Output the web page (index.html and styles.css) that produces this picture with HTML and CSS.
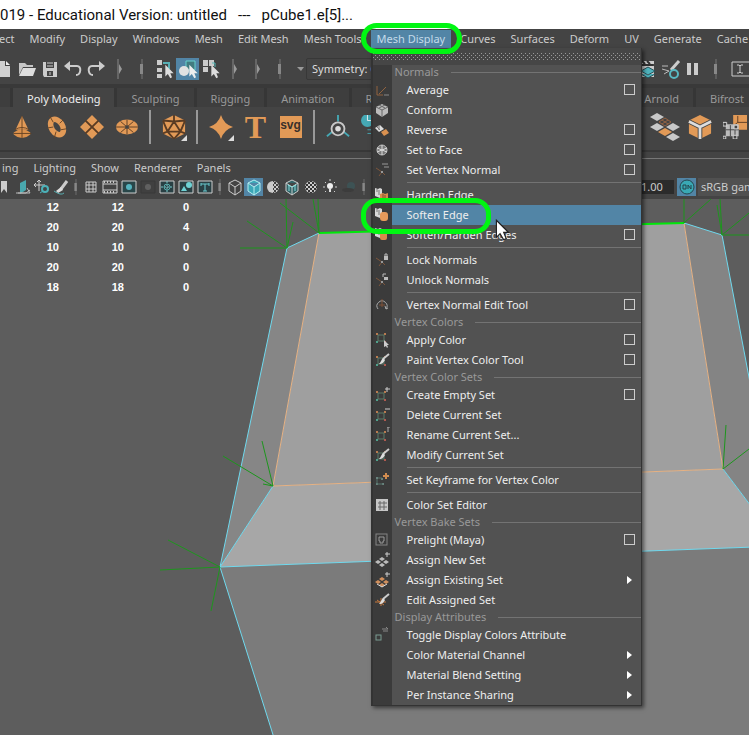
FILE: index.html
```html
<!DOCTYPE html>
<html lang="en">
<head>
<meta charset="utf-8">
<title>Educational Version: untitled</title>
<link rel="stylesheet" href="styles.css">
</head>
<body>
<svg class="defs" aria-hidden="true">
  <defs>
    <symbol id="grip" viewBox="0 0 12 20"><path d="M6 0v20" stroke="#777"/><rect x="4" y="5" width="3" height="10" fill="#888"/></symbol>
    <symbol id="grip-arrow" viewBox="0 0 12 20"><path d="M5 0v20" stroke="#888"/><path d="M6 5l3 5-3 5z" fill="#999"/></symbol>
    <symbol id="cursor" viewBox="0 0 12 18"><path d="M1 1v14l3-3 3 5 2-1-2-5h4z"/></symbol>
    <symbol id="vtx" viewBox="0 0 16 16"><path d="M4 6h6v6H4z" fill="none" stroke="#5d7a68"/><path d="M2 4h2v2H2zM10 4h2v2h-2z" fill="#b87b50"/><path d="M2 12h2v2H2z" fill="#4fa08b"/><path d="M10 12h2v2h-2z" fill="#b05a50"/></symbol>
    <symbol id="normal" viewBox="0 0 16 16"><path d="M2 6l6 4 3 3M8 10l-3 4" fill="none" stroke="#7d563b"/><path d="M7 9h2v2H7z" fill="#999"/></symbol>
    <symbol id="brush" viewBox="0 0 16 16"><path d="M15 2l-6 5" stroke="#ccc" stroke-width="2"/><path d="M9 6l2 2c-2 4-4 4-6 4 2-2 2-4 4-6z" fill="#ddd"/></symbol>
    <symbol id="edge" viewBox="0 0 16 16"><path d="M1 1l3 1 2-1 2 1v8l-2 1-5-2z" fill="#d8d8d8"/><path d="M3 2v3M5 3v5" stroke="#777"/></symbol>
    <symbol id="tiles" viewBox="0 0 16 16"><path d="M8 5l3 2-3 2-3-2zM4 8l3 2-3 2-3-2zM12 8l3 2-3 2-3-2zM8 11l3 2-3 2-3-2z"/></symbol>
    <symbol id="cube" viewBox="0 0 18 18"><path d="M9 2l6 3v8l-6 4-6-4V5zM3 5l6 4 6-4M9 9v8"/></symbol>
    <pattern id="check" width="4" height="4" patternUnits="userSpaceOnUse"><path d="M0 0h2v2H0zM2 2h2v2H2z" fill="#ccc"/></pattern>
  </defs>
</svg>

<div class="app">
<header class="title">019 - Educational Version: untitled &nbsp; --- &nbsp; pCube1.e[5]...</header>

<nav class="menubar" aria-label="Main">
  <button>ect</button><button>Modify</button><button>Display</button><button>Windows</button><button>Mesh</button><button>Edit Mesh</button><button>Mesh Tools</button>
  <div class="open-menu">
    <button class="active" aria-expanded="true">Mesh Display</button>
    <div class="dropdown">
      <div class="tear"></div>
      <h2>Normals</h2>
      <ul>
        <li><svg viewBox="0 0 16 16"><path d="M3 4v9h6M5 12l7-7" fill="none" stroke="#92633f"/><path d="M10 13h5" stroke="#888"/></svg><button>Average</button><input type="checkbox" aria-label="Average options"></li>
        <li><svg viewBox="0 0 16 16"><path d="M8 2l6 3v6l-6 4-6-4V5z" fill="#bbb"/><path d="M2 5l6 3 6-3M8 8v7M5 3l6 3M11 3L5 6" fill="none" stroke="#666"/></svg><button>Conform</button></li>
        <li><svg viewBox="0 0 16 16"><path d="M1 6l5-3 4 4-5 3z" fill="#ddd"/><path d="M7 10l5-3 3 4-5 3z" fill="#d99150"/><path d="M3 5l3 3M5 3v5" stroke="#777"/></svg><button>Reverse</button><input type="checkbox" aria-label="Reverse options"></li>
        <li><svg viewBox="0 0 16 16"><circle cx="8" cy="8" r="5" fill="#777" stroke="#bbb"/><path d="M8 3v10M3 6l10 4M3 10l10-4" stroke="#ddd"/></svg><button>Set to Face</button><input type="checkbox" aria-label="Set to Face options"></li>
        <li><svg viewBox="0 0 16 16"><use href="#normal"/><path d="M8 2h6M10 5h5" stroke="#999"/></svg><button>Set Vertex Normal</button><input type="checkbox" aria-label="Set Vertex Normal options"></li>
        <li class="sep" role="separator"></li>
        <li><svg viewBox="0 0 16 16"><use href="#edge"/><path d="M6 7l3-1 2 1 3-1v7l-3 1-5-1z" fill="#d98a4b"/><path d="M9 7v6M11 8v5" stroke="#81512e"/></svg><button>Harden Edge</button></li>
        <li class="selected"><svg viewBox="0 0 16 16"><use href="#edge"/><rect x="6" y="5" width="8" height="9" rx="3" fill="#e79a5b"/></svg><button>Soften Edge</button>
          <svg class="pointer" viewBox="0 0 12 18"><use href="#cursor" fill="#fff" stroke="#222"/></svg><span class="ring"></span></li>
        <li><svg viewBox="0 0 16 16"><use href="#edge"/><rect x="6" y="5" width="7" height="8" rx="2" fill="#d98a4b"/></svg><button>Soften/Harden Edges</button><input type="checkbox" aria-label="Soften/Harden Edges options"></li>
        <li class="sep" role="separator"></li>
        <li><svg viewBox="0 0 16 16"><use href="#normal"/><rect x="10" y="4" width="4" height="4" fill="#bbb"/><path d="M11 4V2h2v2" fill="none" stroke="#bbb"/></svg><button>Lock Normals</button></li>
        <li><svg viewBox="0 0 16 16"><use href="#normal"/><rect x="10" y="5" width="4" height="3" fill="#bbb"/><path d="M9 5V2h3" fill="none" stroke="#bbb"/></svg><button>Unlock Normals</button></li>
        <li class="sep" role="separator"></li>
        <li><svg viewBox="0 0 16 16"><path d="M4 12a5 5 0 1 1 8 0l2-1M12 12l-1-3" fill="none" stroke="#aaa"/><path d="M8 2v8M5 8h6" stroke="#805339"/></svg><button>Vertex Normal Edit Tool</button><input type="checkbox" aria-label="Vertex Normal Edit Tool options"></li>
      </ul>
      <h2>Vertex Colors</h2>
      <ul>
        <li><svg viewBox="0 0 16 16"><use href="#vtx" y="-3"/><path d="M10 8v7l2-1 1 2 1-1-1-2h2z" fill="#ccc"/></svg><button>Apply Color</button><input type="checkbox" aria-label="Apply Color options"></li>
        <li><svg viewBox="0 0 16 16"><use href="#vtx"/><use href="#brush"/></svg><button>Paint Vertex Color Tool</button><input type="checkbox" aria-label="Paint Vertex Color Tool options"></li>
      </ul>
      <h2>Vertex Color Sets</h2>
      <ul>
        <li><svg viewBox="0 0 16 16"><use href="#vtx"/><path d="M11 2h5M13 0v5" stroke="#ccc"/></svg><button>Create Empty Set</button><input type="checkbox" aria-label="Create Empty Set options"></li>
        <li><svg viewBox="0 0 16 16"><use href="#vtx"/><path d="M11 2h5" stroke="#ccc"/></svg><button>Delete Current Set</button></li>
        <li><svg viewBox="0 0 16 16"><use href="#vtx"/><path d="M14 0v5M13 0h3" stroke="#aaa"/></svg><button>Rename Current Set...</button></li>
        <li><svg viewBox="0 0 16 16"><use href="#vtx"/><use href="#brush"/></svg><button>Modify Current Set</button></li>
        <li class="sep" role="separator"></li>
        <li><svg viewBox="0 0 16 16"><path d="M2 5h2v2H2zM7 6h2v2H7zM2 11h2v2H2zM8 11h2v2H8z" fill="#68827d"/><path d="M3 7v5h6M4 6h4" fill="none" stroke="#58766f"/><path d="M9 4h6M12 1v6" stroke="#d08c50" stroke-width="2"/></svg><button>Set Keyframe for Vertex Color</button></li>
        <li class="sep" role="separator"></li>
        <li><svg viewBox="0 0 16 16"><rect x="2" y="2" width="12" height="12" fill="#c6c6c6"/><path d="M6 4v9M10 4v9M4 6h9M4 10h9" stroke="#666"/></svg><button>Color Set Editor</button></li>
      </ul>
      <h2>Vertex Bake Sets</h2>
      <ul>
        <li><svg viewBox="0 0 16 16"><rect x="2" y="2" width="11" height="11" fill="none" stroke="#848484"/><path d="M5 5h5v4H9v2H6V9H5z" fill="none" stroke="#999"/></svg><button>Prelight (Maya)</button><input type="checkbox" aria-label="Prelight (Maya) options"></li>
        <li><svg viewBox="0 0 16 16"><use href="#tiles" fill="#bcbcbc"/><path d="M11 2h5M13 0v5" stroke="#ccc"/></svg><button>Assign New Set</button></li>
        <li><svg viewBox="0 0 16 16"><use href="#tiles" fill="#d2905d"/><path d="M3 12l5 3 5-3" fill="none" stroke="#ddd"/><path d="M11 2h5M13 0v5" stroke="#ccc"/></svg><button>Assign Existing Set</button><i class="more"></i></li>
        <li><svg viewBox="0 0 16 16"><path d="M1 10h11M7 6v8M3 8l7 5" stroke="#c6783d"/><use href="#brush"/></svg><button>Edit Assigned Set</button></li>
      </ul>
      <h2>Display Attributes</h2>
      <ul>
        <li><svg viewBox="0 0 16 16"><rect x="2" y="8" width="5" height="5" fill="none" stroke="#7b9b91"/><path d="M8 2h6M9 4h5M12 0l2 2" stroke="#888"/></svg><button>Toggle Display Colors Attribute</button></li>
        <li><button>Color Material Channel</button><i class="more"></i></li>
        <li><button>Material Blend Setting</button><i class="more"></i></li>
        <li><button>Per Instance Sharing</button><i class="more"></i></li>
      </ul>
    </div>
    <span class="ring"></span>
  </div>
  <button>Curves</button><button>Surfaces</button><button>Deform</button><button>UV</button><button>Generate</button><button>Cache</button>
</nav>

<div class="status">
  <div class="tools">
    <button aria-label="New"><svg viewBox="0 0 22 22"><path d="M4 3h8v5h5v11H4z" fill="#d0d0d0"/><path d="M13 3l4 4h-4z" fill="#eee"/></svg></button>
    <button aria-label="Open"><svg viewBox="0 0 22 22"><path d="M3 17V5h6l2 2h6v2H7z" fill="#c6c6c6"/><path d="M7 10h13l-3 8H3z" fill="#ddd"/></svg></button>
    <button aria-label="Save"><svg viewBox="0 0 22 22"><path d="M4 4h14v15H5l-1-2z" fill="#ccc"/><path d="M7 4h8v6H7zM8 13h6v5H8z" fill="#444"/><path d="M8 5h6M8 8h6M11 14v3" stroke="#ccc"/></svg></button>
    <button aria-label="Undo"><svg viewBox="0 0 22 22"><path d="M5 8h10c5 0 4 9-1 9" fill="none" stroke="#ccc" stroke-width="2"/><path d="M8 3v10L2 8z" fill="#ccc"/></svg></button>
    <button aria-label="Redo"><svg viewBox="0 0 22 22"><path d="M17 8H7c-5 0-4 9 1 9" fill="none" stroke="#ccc" stroke-width="2"/><path d="M14 3v10l6-5z" fill="#ccc"/></svg></button>
    <span><svg class="g"><use href="#grip-arrow"/></svg></span>
    <span><svg class="g"><use href="#grip"/></svg></span>
    <button aria-label="Hierarchy"><svg viewBox="0 0 22 22"><path d="M3 2h5v5H3zM3 10h5v4H3zM3 16h5v4H3z" fill="#ccc"/><path d="M9 5h6v6" fill="none" stroke="#57b0b6" stroke-width="2"/><use href="#cursor" x="10" y="6" width="11" height="15" fill="#ddd"/></svg></button>
    <button class="on" aria-label="Object"><svg viewBox="0 0 22 22"><path d="M9 3h9v9H9z" fill="#427c80" stroke="#68d2ce"/><circle cx="7" cy="13" r="5" fill="#e2e2e2"/><use href="#cursor" x="11" y="6" width="11" height="15" fill="#eee"/></svg></button>
    <button aria-label="Component"><svg viewBox="0 0 22 22"><path d="M3 2h5v6H3zM9 2h5v6H9zM3 9h5v5H3z" fill="#ccc"/><path d="M12 5h3v4" stroke="#5bb" fill="none"/><use href="#cursor" x="10" y="6" width="11" height="15" fill="#ddd"/></svg></button>
    <span><svg class="g"><use href="#grip-arrow"/></svg></span>
    <span><svg class="g"><use href="#grip-arrow"/></svg></span>
    <span><svg class="g"><use href="#grip"/></svg></span>
    <span><svg class="g" viewBox="0 0 12 20"><path d="M0 8h7l-3 4z" fill="#999"/></svg></span>
  </div>
  <button class="combo">Symmetry: Off</button>
  <div class="tools right">
    <button aria-label="Render"><svg viewBox="0 0 22 22"><path d="M3 3h15v3H3zM3 8h15v11H3z" fill="#ccc"/><path d="M6 3l3 3M11 3l3 3M4 7h13" stroke="#333" stroke-width="2"/><path d="M12 9l7 4-7 4-7-4zM5 16l7 4 7-4" fill="#4fb4be" stroke="#274e55"/></svg></button>
    <button aria-label="Render settings"><svg viewBox="0 0 22 22"><path d="M20 3l-8 9" stroke="#ccc" stroke-width="3"/><path d="M3 8h6M3 11l7 2M5 16l5-3" stroke="#bbb"/><circle cx="15" cy="16" r="4" fill="none" stroke="#58b8c1" stroke-width="2"/></svg></button>
    <button aria-label="Pause"><svg viewBox="0 0 22 22"><path d="M5 5h4v12H5zM12 5h4v12h-4z" fill="#ccc"/></svg></button>
    <span><svg class="g"><use href="#grip"/></svg></span>
    <button aria-label="Name field"><svg viewBox="0 0 22 22"><path d="M22 4H4v14h18M9 7h2l1 1 1-1h2M9 15h2l1-1 1 1h2M12 8v6" fill="none" stroke="#ccc"/></svg></button>
  </div>
</div>

<div class="tabs" role="tablist">
  <button class="edge-tab" aria-label="Curves tab"></button><button class="current">Poly Modeling</button><button>Sculpting</button><button>Rigging</button><button>Animation</button><button class="rest">R</button><button>Arnold</button><button class="last">Bifrost</button>
</div>

<div class="shelf">
  <button aria-label="Cone"><svg viewBox="0 0 26 26"><path d="M13 1l7 15H6z" fill="#e29a57"/><path d="M4 19q9-7 18 0v2q-9 8-18 0z" fill="#db914c"/><path d="M13 1v24M5 16q8-5 16 0M4 20h19" stroke="#654224" fill="none"/></svg></button>
  <button aria-label="Torus"><svg viewBox="0 0 26 26"><ellipse cx="13" cy="13" rx="6" ry="9" fill="none" stroke="#e29a57" stroke-width="6" transform="rotate(-32 13 13)"/><path d="M5 1l4 7M20 5l-4 4M3 14l6-1M23 15l-6 1M10 25l2-7" stroke="#654224"/></svg></button>
  <button aria-label="Plane"><svg viewBox="0 0 26 26"><path d="M13 0l13 13-13 13L0 13z" fill="#e29a57"/><path d="M6 6l14 14M20 6L6 20" stroke="#593b23" stroke-width="2"/></svg></button>
  <button aria-label="Disc"><svg viewBox="0 0 26 26"><ellipse cx="13" cy="13" rx="12" ry="8" fill="#e29a57"/><path d="M1 13h24M6 7l14 12M20 7L6 19M13 5v16" stroke="#593b23"/><circle cx="13" cy="13" r="2" fill="#444"/></svg></button>
  <i class="bar"></i>
  <button aria-label="Platonic solid"><svg viewBox="0 0 26 26"><path d="M13 0l12 6v14l-12 6L1 20V6z" fill="#e29a57"/><path d="M1 6l12 1 12-1M13 0v7L6 18h14L13 7M1 6l5 12-5 2M25 6l-5 12 5 2M6 18l7 8 7-8" fill="none" stroke="#593b23" stroke-width="2"/></svg><b></b></button>
  <i class="bar"></i>
  <button aria-label="Super shape"><svg viewBox="0 0 26 26"><path d="M13 0q3 10 13 13-10 3-13 13Q10 16 0 13 10 10 13 0z" fill="#e29a57"/></svg><b></b></button>
  <button class="type">T</button>
  <button class="svg-tool"><span>svg</span></button>
  <i class="bar"></i>
  <button aria-label="Axis"><svg viewBox="0 0 26 26"><path d="M13 0v7M7 18l-6 5M19 18l6 5" stroke="#45a9b5" stroke-width="2"/><circle cx="13" cy="15" r="7" fill="none" stroke="#c8c8c8" stroke-width="2"/><circle cx="13" cy="15" r="3" fill="#ddd"/></svg></button>
  <button aria-label="Time"><svg viewBox="0 0 26 26"><circle cx="7" cy="6" r="7" fill="#45a9b5"/><path d="M7 0v6h6" stroke="#eee" fill="none"/><path d="M7 16h4M7 20h4" stroke="#45a9b5"/></svg></button>
  <div class="right">
    <button aria-label="Tiles"><svg class="wide" viewBox="0 0 30 28"><g fill="#c8c8c8"><path d="M7 0l7 4-7 4-7-4zM7 10l7 4-7 4-7-4zM23 10l7 4-7 4-7-4zM23 20l7 4-7 4-7-4z"/></g><path d="M15 15l7 4-7 4-7-4z" fill="#e29a57"/><path d="M15 5l6 4-6 4-6-4zM12 7l6 4M18 7l-6 4" fill="none" stroke="#946342"/></svg></button>
    <button aria-label="Cube"><svg viewBox="0 0 26 26"><path d="M13 0l12 6v14l-12 6-12-6V6z" fill="#e29a57"/><path d="M1 7l12 6 12-6M13 13v13" fill="none" stroke="#444" stroke-width="5"/><path d="M1 7l12 6 12-6M13 13v13" fill="none" stroke="#ddd" stroke-width="3"/></svg></button>
    <button aria-label="Bevel"><svg viewBox="0 0 26 26"><path d="M11 0h15v16H11z" fill="#e29a57"/><path d="M16 1v7h10M16 8l-5 4" stroke="#593b23" fill="none"/><path d="M3 10h14v13H3z" fill="#bbb"/><path d="M3 16h14M8 11v12M13 11v12" stroke="#444"/><path d="M0 8h4v4H0zM0 23h3v3H0zM11 22h4v4h-4zM12 11h4v4h-4z" fill="#444" stroke="#ddd"/></svg></button>
  </div>
</div>

<nav class="panel-menu" aria-label="Panel">
  <button>ing</button><button>Lighting</button><button>Show</button><button>Renderer</button><button>Panels</button>
</nav>

<div class="panel-tools">
  <button aria-label="Bookmark"><svg viewBox="0 0 18 18"><path d="M6 3h6v12l-3-4-3 4z" fill="#ccc"/></svg></button>
  <button aria-label="Image plane"><svg viewBox="0 0 18 18"><path d="M6 5l6-3v10l-6 4z" fill="#49a8ae"/><path d="M2 15h10l4-3M13 10l3 5H4" fill="none" stroke="#bbb"/></svg></button>
  <button aria-label="Pan and zoom"><svg viewBox="0 0 18 18"><path d="M1 7h11M6 2v11M4 4l2-2 2 2M3 5L1 7l2 2" fill="none" stroke="#ccc"/><circle cx="12" cy="11" r="3" fill="none" stroke="#4bb1b8" stroke-width="2"/><path d="M7 15l3-2" stroke="#4bb1b8"/></svg></button>
  <button aria-label="Grease pencil"><svg viewBox="0 0 18 18"><path d="M15 3l-6 8" stroke="#ccc" stroke-width="3"/><path d="M9 9l2 3-5 3-2-2z" fill="#ddd"/><path d="M2 13q7 5 10 2" fill="none" stroke="#58aeb1"/></svg></button>
  <i><svg class="g"><use href="#grip"/></svg></i>
  <button aria-label="Grid"><svg viewBox="0 0 18 18"><path d="M4 4h10v10H4zM7 4v10M11 4v10M4 7h10M4 11h10" fill="none" stroke="#ccc"/></svg></button>
  <button aria-label="Film gate"><svg viewBox="0 0 18 18"><path d="M2 3h14v12H2zM2 6h14M2 12h14" fill="none" stroke="#ccc"/><path d="M3 4h12M3 14h12" stroke="#ccc" stroke-width="2" stroke-dasharray="1 2"/></svg></button>
  <button aria-label="Resolution gate"><svg viewBox="0 0 18 18"><path d="M2 3h14v12H2z" fill="#29474a" stroke="#ccc"/><circle cx="9" cy="9" r="3" fill="#55b4bf"/></svg></button>
  <button aria-label="Gate mask"><svg viewBox="0 0 18 18"><path d="M2 3h14v12H2z" fill="#404040" stroke="#383838"/><circle cx="9" cy="9" r="3" fill="#606060"/></svg></button>
  <button aria-label="Field chart"><svg viewBox="0 0 18 18"><path d="M2 3h14v12H2z" fill="#294044" stroke="#ccc"/><path d="M3 9h12M9 3v12" stroke="#7cc6c8" stroke-dasharray="2 1"/><circle cx="9" cy="9" r="3" fill="none" stroke="#5aa"/></svg></button>
  <button aria-label="Safe action"><svg viewBox="0 0 18 18"><path d="M2 3h14v12H2z" fill="#294044" stroke="#ccc"/><path d="M4 13l3-5 3 5z" fill="#6ed1d4"/><circle cx="12" cy="7" r="3" fill="#6ed1d4"/></svg></button>
  <button aria-label="Safe title"><svg viewBox="0 0 18 18"><path d="M2 3h14v12H2z" fill="#294044" stroke="#ccc"/><path d="M5 6h8M9 6v7M7 13h4M5 5v3M13 5v3" stroke="#69c8cd" fill="none"/></svg></button>
  <i><svg class="g"><use href="#grip"/></svg></i>
  <button aria-label="Wireframe"><svg viewBox="0 0 18 18"><use href="#cube" fill="none" stroke="#ccc"/></svg></button>
  <button class="on" aria-label="Shaded"><svg viewBox="0 0 18 18"><use href="#cube" fill="#3ba8b8" stroke="#b6eff1"/></svg></button>
  <button aria-label="Default material"><svg viewBox="0 0 18 18"><path d="M9 3a6 6 0 0 0 0 12z" fill="#ccc"/><path d="M9 3a6 6 0 0 1 0 12z" fill="url(#check)"/></svg></button>
  <button aria-label="Wire on shaded"><svg viewBox="0 0 18 18"><use href="#cube" fill="#326468" stroke="#ccc"/><path d="M5 7l4 2 4-2M6 7v6M12 7v6" fill="none" stroke="#8dd"/></svg></button>
  <button aria-label="Textured"><svg viewBox="0 0 18 18"><circle cx="9" cy="9" r="6" fill="#333"/><circle cx="9" cy="9" r="6" fill="url(#check)"/></svg></button>
  <button aria-label="Lights"><svg viewBox="0 0 18 18"><path d="M9 1v2M2 9h2M14 9h2M4 4l1 1M14 4l-1 1M4 14l1-1M14 14l-1-1" stroke="#ccc"/><circle cx="9" cy="8" r="3" fill="#eee"/><path d="M8 10h2v4H8z" fill="#ddd"/></svg></button>
  <button aria-label="Shadows"><svg viewBox="0 0 18 18"><circle cx="11" cy="8" r="4" fill="#3d5254"/><ellipse cx="8" cy="12" rx="6" ry="2" fill="#3c3c3c"/></svg></button>
  <i><svg class="g"><use href="#grip"/></svg></i>
  <div class="right">
    <input type="text" value="1.00" aria-label="Gamma"><button class="on wide" aria-label="Color management"><svg viewBox="0 0 18 18"><circle cx="9" cy="9" r="7" fill="#39a9b4" stroke="#25464f"/><path d="M5 7h3v4H5zM10 11V7l3 4V7" fill="none" stroke="#24424a"/></svg></button><button class="space">sRGB gam</button>
  </div>
</div>

<main class="viewport">
  <svg class="scene" viewBox="0 199 749 536" preserveAspectRatio="xMinYMin slice" aria-label="Viewport">
    <path d="M220 567L781 546V760H281z" fill="#7b7b7b"/>
    <path d="M287 248L319 233L273 486L220 567z" fill="#868686"/>
    <path d="M319 233L684 223L723 469L273 486z" fill="#9f9f9f"/>
    <path d="M273 486L723 469L781 546L220 567z" fill="#a7a7a7"/>
    <path d="M684 223L722 235L781 546L723 469z" fill="#848484"/>
    <g fill="none" stroke="#e6b284"><path d="M319 233L273 486L723 469L684 223"/></g>
    <g fill="none" stroke="#6fd9ee"><path d="M319 233L287 248L220 567L273 486M220 567L781 546M220 567L281 760M684 223L722 235L781 546L723 469"/></g>
    <path d="M319 233L684 223" stroke="#00e80a" stroke-width="2"/>
    <g fill="none" stroke="#1d961d"><path d="M287 248H240M287 248L247 221M287 248L286 199M287 248L293 222M319 233L280 203M319 233L313 199M319 233L318 199M220 567L160 570M220 567L168 540M220 567L211 611M273 486L223 456M273 486L262 441M273 486L263 484M684 223V199M684 223L711 199M722 235L720 199M722 235L717 205M722 235L749 213M722 235H749M723 469L726 425M723 469L749 449"/></g>
  </svg>
  <table class="counts">
    <tr><td>12</td><td>12</td><td>0</td></tr>
    <tr><td>20</td><td>20</td><td>4</td></tr>
    <tr><td>10</td><td>10</td><td>0</td></tr>
    <tr><td>20</td><td>20</td><td>0</td></tr>
    <tr><td>18</td><td>18</td><td>0</td></tr>
  </table>
</main>
</div>
</body>
</html>
```
FILE: styles.css
```css
* { box-sizing: border-box; }
body { margin: 0; background: #5d5d5d; color: #ccc; font: 11px/16px "Noto Sans", "Open Sans", sans-serif; overflow: hidden; }
button { margin: 0; padding: 0; border: 0; background: none; color: inherit; font: inherit; white-space: nowrap; flex: none; }
.defs { position: absolute; width: 0; height: 0; }
.app { display: flex; flex-direction: column; height: 100vh; }
.title { flex: none; height: 29px; background: #fff; color: #111; font: 15px/30px Roboto, "Open Sans", sans-serif; white-space: nowrap; }

/* Main menu bar */
.menubar { flex: none; display: flex; align-items: center; height: 21px; gap: 15px; padding-bottom: 2px; background: #444; }
.menubar > :first-child { margin-left: -1px; }
.open-menu { position: relative; z-index: 2; margin: 0 -6px; }
.active { display: block; height: 18px; padding: 0 6px; background: #5285a6; color: #c4dbea; }
.ring { position: absolute; z-index: 3; border: 5px solid #00f612; border-radius: 16px; pointer-events: none; }
.open-menu > .ring { inset: -7px -11px -6px -10px; }

/* Drop-down */
.dropdown { position: absolute; top: 100%; left: 0; width: 271px; border: 1px solid #333; border-left-width: 2px; border-top: 0; background: linear-gradient(90deg, #3b3b3b 19px, #525252 19px); color: #eee; box-shadow: 2px 2px 4px #0008; }
.tear { height: 17px; border: solid #464646; border-width: 5px 0; background: conic-gradient(from 270deg at 1px 1px, #999 90deg, transparent 0) 0 0 / 4px 4px, conic-gradient(from 270deg at 1px 1px, #999 90deg, transparent 0) 2px 2px / 4px 4px, #464646; }
.dropdown h2 { display: flex; align-items: center; gap: 12px; height: 15px; margin: 0; padding-left: 22px; color: #999; font-size: 11px; font-weight: 400; line-height: 14px; }
.dropdown h2::after { content: ""; flex: 1; height: 1px; background: #737373; }
.dropdown ul { margin: 0; padding: 0; list-style: none; }
.dropdown li { position: relative; display: grid; grid-template-columns: 19px 1fr 24px; align-items: center; height: 20px; }
.dropdown li > svg { grid-column: 1; grid-row: 1; width: 16px; height: 16px; margin-left: 1px; }
.dropdown li > button { grid-column: 2; grid-row: 1; height: 20px; padding-left: 15px; text-align: left; }
.dropdown input { appearance: none; grid-column: 3; width: 11px; height: 11px; margin: 0 0 0 7px; justify-self: start; border: 1px solid #ccc; }
.dropdown .sep { height: 5px; }
.sep::before { content: ""; grid-column: 2 / 4; height: 1px; margin-left: 15px; background: #737373; }
.more { grid-column: 3; margin-left: 10px; width: 0; border: solid transparent; border-width: 4px 0 4px 5px; border-left-color: #fff; }
.dropdown .selected { background: linear-gradient(90deg, transparent 19px, #5285a6 19px); }
.selected .ring { inset: -7px 150px -9px -12px; }
.dropdown .selected .pointer { position: absolute; left: 122px; top: 14px; width: 15px; height: 22px; z-index: 4; margin: 0; }

/* Status line */
.status { flex: none; display: flex; align-items: center; height: 38px; padding-top: 4px; background: #444; border-bottom: 4px solid #393939; overflow: hidden; }
.tools { display: flex; align-items: center; margin-left: -8px; }
.tools > * { display: grid; place-items: center; width: 23px; height: 22px; flex: none; }
.tools > * > svg { width: 22px; height: 22px; }
.tools > * > .g { width: 12px; height: 20px; }
.on { background: #5285a6; }
.combo { flex: 1; min-width: 0; height: 22px; margin-left: -8px; padding-left: 5px; border: 1px solid #383838; border-radius: 2px; text-align: left; color: #ddd; }
.tools.right { margin-left: 0; margin-right: -1px; }

/* Shelf */
.tabs { flex: none; display: flex; height: 19px; gap: 3px; background: #363636; overflow: hidden; }
.tabs button { height: 19px; padding: 2px 14px 0; background: #3e3e3e; color: #999; line-height: 17px; }
.tabs .edge-tab { width: 10px; padding: 0; }
.tabs .current { background: #444; color: #eee; }
.tabs .rest { flex: 1 1 0; min-width: 0; text-align: left; overflow: hidden; }
.tabs .last { margin-right: -9px; }
.shelf { flex: none; display: flex; align-items: center; height: 45px; padding: 0 0 4px 4px; background: #444; border-bottom: 2px solid #383838; overflow: hidden; }
.shelf button { position: relative; display: grid; place-items: center; width: 35px; height: 34px; }
.shelf button svg { width: 24px; height: 24px; }
.shelf button .wide { width: 30px; height: 28px; }
.shelf b { position: absolute; right: 4px; bottom: 3px; border-left: 6px solid transparent; border-bottom: 6px solid #ddd; }
.bar { flex: none; width: 2px; height: 34px; margin: 0 5px; background: #999; }
.shelf .type { color: #e29a57; font: bold 32px/32px "Liberation Serif", serif; }
.svg-tool span { width: 22px; height: 22px; background: #e29a57; color: #3a302a; font: bold 12px/18px "Liberation Sans", sans-serif; text-align: center; }
.right { display: flex; flex: none; margin-left: auto; }
.shelf .right { margin-right: -3px; }

/* Panel bars */
.panel-menu { flex: none; display: flex; align-items: center; gap: 15px; height: 25px; padding: 6px 0 0 2px; background: linear-gradient(#444 6px, #777 6px, #777 7px, #444 7px); }
.panel-tools { flex: none; display: flex; align-items: center; height: 22px; padding-bottom: 2px; margin-left: -6px; background: #444; overflow: hidden; }
.panel-tools button { display: grid; place-items: center; width: 19px; height: 18px; }
.panel-tools button svg { width: 18px; height: 18px; }
.panel-tools i { flex: none; display: grid; place-items: center; width: 11px; }
.panel-tools i svg { width: 10px; height: 16px; }
.panel-tools input { width: 37px; height: 14px; margin: 2px 3px 0 0; padding: 0 0 0 4px; border: 0; background: #2b2b2b; color: #ccc; font: inherit; }
.panel-tools .space { display: block; width: 51px; margin-left: 2px; padding-left: 3px; background: #505050; text-align: left; }

/* Viewport */
.viewport { position: relative; flex: 1; min-height: 0; background: #5d5d5d; }
.scene { display: block; width: 100%; height: 100%; }
.counts { position: absolute; top: -2px; left: -6px; border-collapse: collapse; color: #fff; font: bold 11px/20px "Liberation Sans", sans-serif; }
.counts td { width: 65px; padding: 0; text-align: right; }
```
